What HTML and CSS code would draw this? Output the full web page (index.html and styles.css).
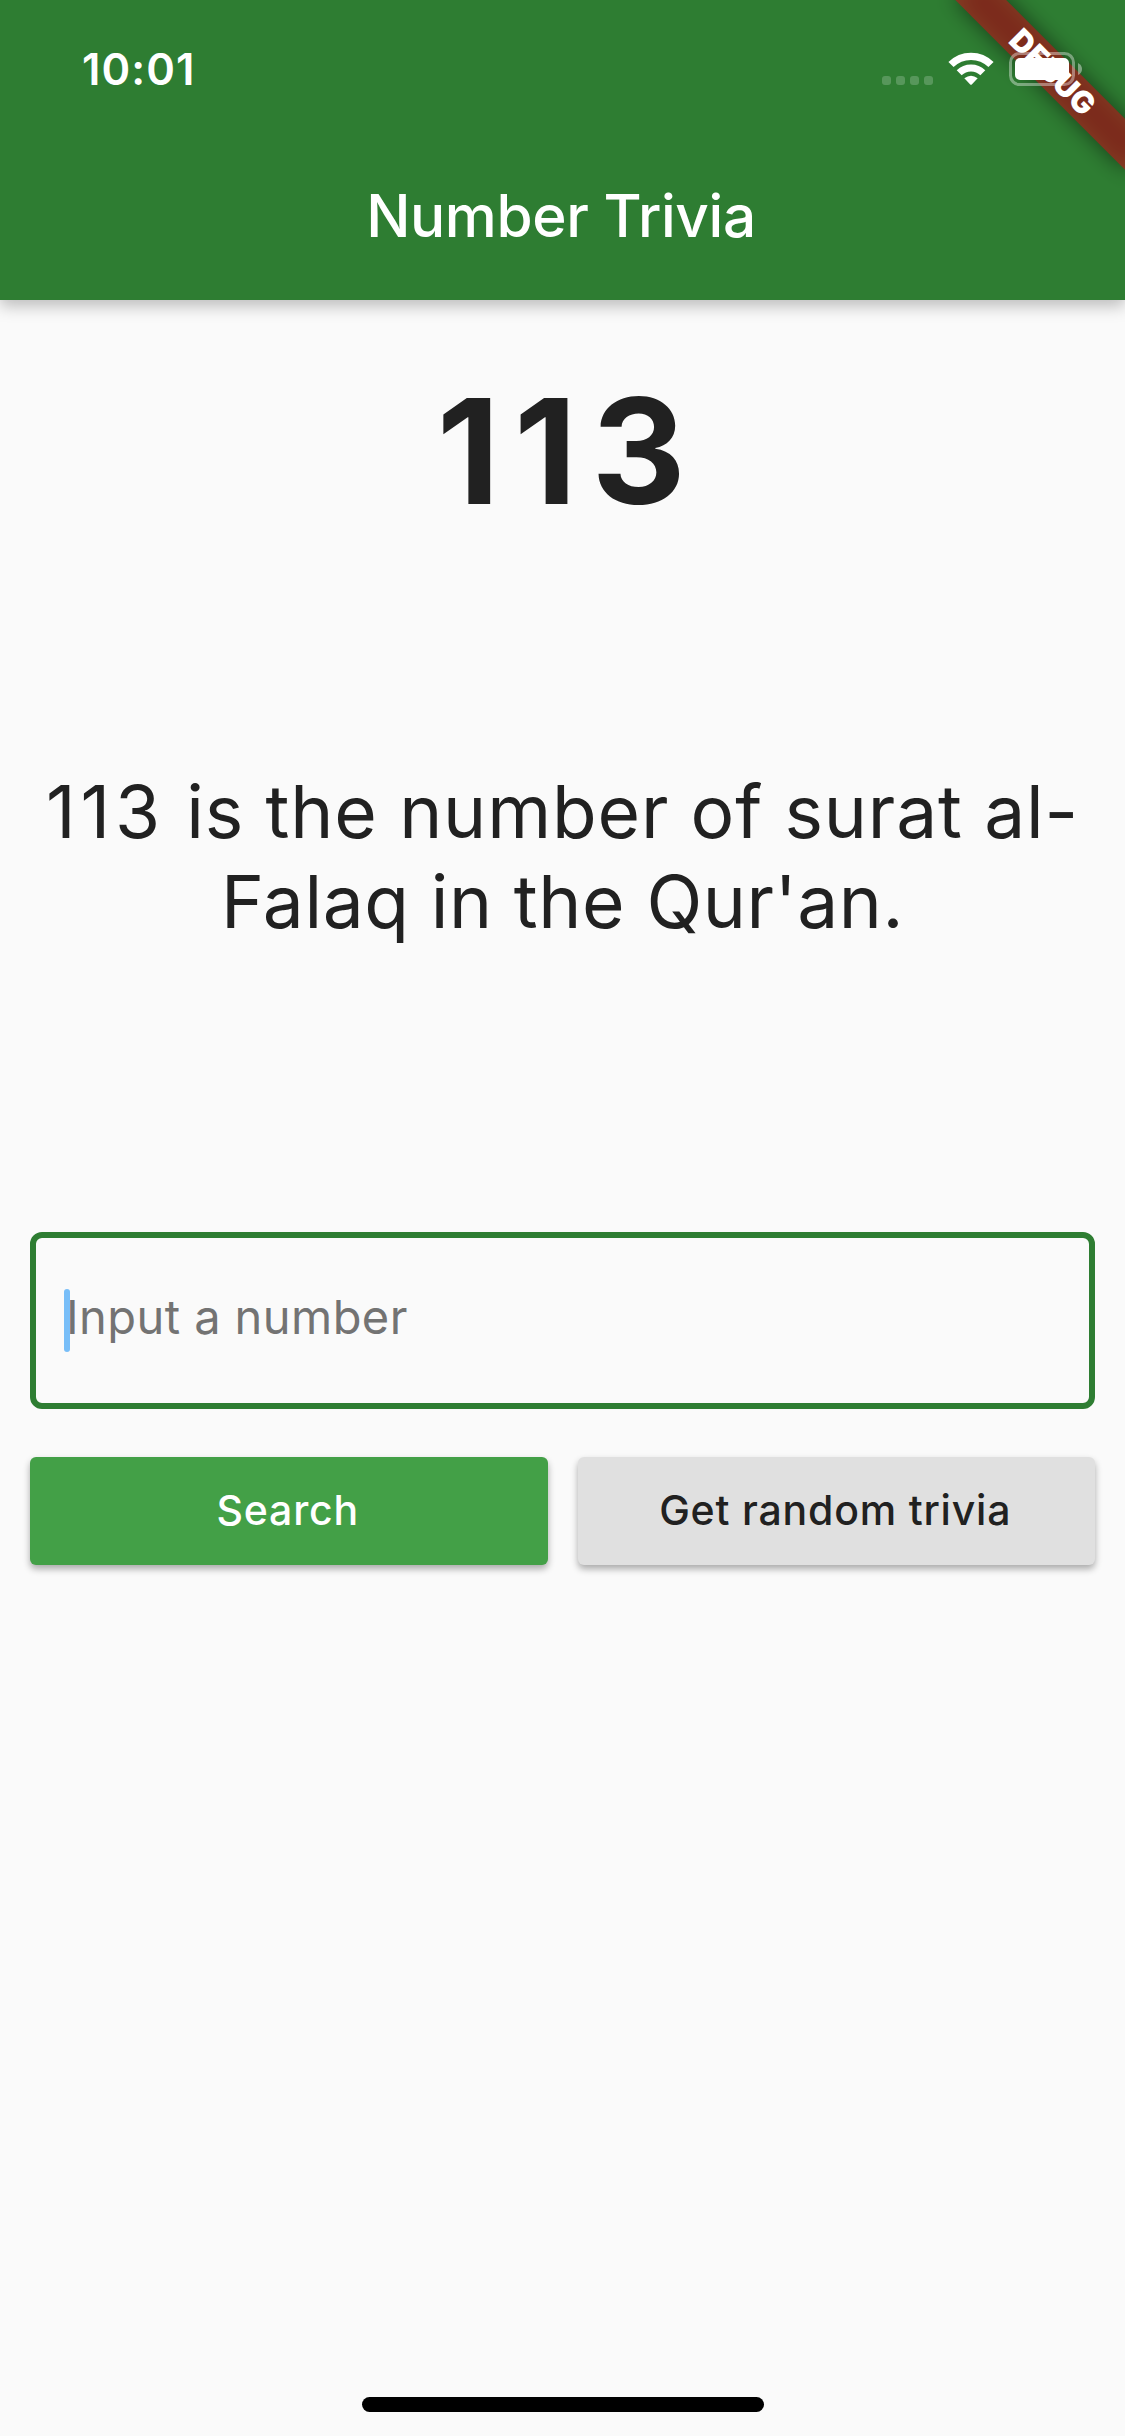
FILE: index.html
```
<!DOCTYPE html>
<html lang="en">
<head>
<meta charset="utf-8">
<title>Number Trivia</title>
<link rel="stylesheet" href="styles.css">
</head>
<body>
<div class="screen">
  <header class="app-bar">
    <div class="status-bar">
      <span class="clock">10:01</span>
      <div class="status-icons">
        <svg class="signal" width="51" height="9" viewBox="0 0 51 9">
          <rect x="0" width="9" height="9" rx="3"/>
          <rect x="14" width="9" height="9" rx="3"/>
          <rect x="28" width="9" height="9" rx="3"/>
          <rect x="42" width="9" height="9" rx="3"/>
        </svg>
        <svg class="wifi" width="46" height="34" viewBox="0 0 138 102">
          <g fill="none" stroke="#fff">
            <path d="M9 37.500A85.500 85.500 0 0 1 129 37.500" stroke-width="22"/>
            <path d="M33.500 62.500A50.500 50.500 0 0 1 104.500 62.500" stroke-width="21"/>
          </g>
          <path d="M49 79Q69 64 89 79L72 97Q69 100 66 97Z" fill="#fff"/>
        </svg>
        <svg class="battery" width="74" height="34" viewBox="0 0 74 34">
          <rect x="1.500" y="1.500" width="63" height="31" rx="9" fill="none" stroke="#fff" stroke-width="3" stroke-opacity=".38"/>
          <path d="M69 11Q73 13 73 17T69 23Z" fill="#fff" fill-opacity=".42"/>
          <rect x="6" y="6" width="54" height="22" rx="5" fill="#fff"/>
        </svg>
      </div>
    </div>
    <h1 class="title">Number Trivia</h1>
  </header>
  <main class="content">
    <div class="number">113</div>
    <div class="trivia"><p><span class="digits">113</span> is the number of surat al-<br><span class="tight">Falaq in the Qur'an.</span></p></div>
    <div class="field">
      <span class="hint">Input a number</span>
      <span class="caret"></span>
    </div>
    <div class="actions">
      <button class="btn btn-primary">Search</button>
      <button class="btn">Get random trivia</button>
    </div>
  </main>
  <div class="home-indicator"></div>
  <div class="debug-banner"><span>DEBUG</span></div>
</div>
</body>
</html>
```
FILE: styles.css
```
* { box-sizing: border-box; }

body {
  margin: 0;
  background: #fafafa;
  color: #212121;
  font-family: "Inter", "Liberation Sans", sans-serif;
}

.screen {
  position: relative;
  display: flex;
  flex-direction: column;
  width: 1125px;
  height: 2436px;
  overflow: hidden;
}

.app-bar {
  height: 300px;
  background: #2e7d32;
  color: #fff;
  box-shadow: 0 6px 15px rgba(0, 0, 0, .25);
}

.status-bar {
  position: relative;
  z-index: 2;
  display: flex;
  justify-content: space-between;
  height: 132px;
  padding: 0 42px 0 82px;
}

.clock {
  height: 138px;
  line-height: 138px;
  font-size: 43.5px;
  font-weight: 600;
  letter-spacing: 1.1px;
}

.status-icons {
  display: flex;
  align-items: flex-start;
  padding-top: 52px;
}

.signal { margin: 24px 15px 0 0; fill: #fff; fill-opacity: .2; }
.wifi { margin-right: 15px; }

.title {
  margin: 0;
  padding-right: 3px;
  line-height: 168px;
  font-size: 58.5px;
  font-weight: 550;
  letter-spacing: -.4px;
  text-align: center;
}

.content {
  flex: 1;
  display: flex;
  flex-direction: column;
  padding: 61px 30px 0;
}

.number {
  padding-left: 12px;
  line-height: 180px;
  font-size: 146px;
  font-weight: 700;
  letter-spacing: 14.5px;
  text-align: center;
}

.trivia {
  display: flex;
  align-items: center;
  justify-content: center;
  height: 631px;
  margin-bottom: 60px;
  font-size: 73px;
  line-height: 90px;
  letter-spacing: .85px;
  text-align: center;
  white-space: nowrap;
}

.trivia p { margin: 0; }
.digits { letter-spacing: 4.8px; }
.tight { letter-spacing: .6px; }

.field {
  position: relative;
  display: flex;
  align-items: center;
  height: 177px;
  margin-bottom: 48px;
  padding: 0 30px 8px;
  border: 6px solid #2e7d32;
  border-radius: 12px;
}

.hint {
  color: #737373;
  font-size: 47px;
  letter-spacing: .43px;
}

.caret {
  position: absolute;
  left: 28px;
  top: 51px;
  width: 6px;
  height: 63px;
  border-radius: 3px;
  background: #78bef8;
}

.actions {
  display: grid;
  grid-template-columns: 1fr 1fr;
  gap: 30px;
}

.btn {
  height: 108px;
  padding: 0 2px 2px 0;
  border: 0;
  border-radius: 6px;
  background: #e0e0e0;
  color: #212121;
  font: 500 41px "Inter", "Liberation Sans", sans-serif;
  letter-spacing: .8px;
  box-shadow: 0 4px 7px rgba(0, 0, 0, .32);
}

.btn-primary { background: #43a047; color: #fff; }

.home-indicator {
  width: 402px;
  height: 15px;
  margin: 0 auto 24px;
  border-radius: 8px;
  background: #000;
}

/* Ribbon across the top right corner, under the status icons */
.debug-banner {
  position: absolute;
  z-index: 1;
  top: 84px;
  right: -120px;
  width: 240px;
  height: 36px;
  transform: rotate(45deg);
  transform-origin: 120px -84px;
  color: #fff;
  font-size: 30.5px;
  font-weight: 900;
  letter-spacing: .2px;
  line-height: 36px;
  text-align: center;
}

.debug-banner::before,
.debug-banner::after {
  content: "";
  position: absolute;
  z-index: -1;
  inset: 0;
  background: rgba(183, 28, 28, .627);
}

.debug-banner::before {
  background: rgba(0, 0, 0, .5);
  filter: blur(11px);
}
```
